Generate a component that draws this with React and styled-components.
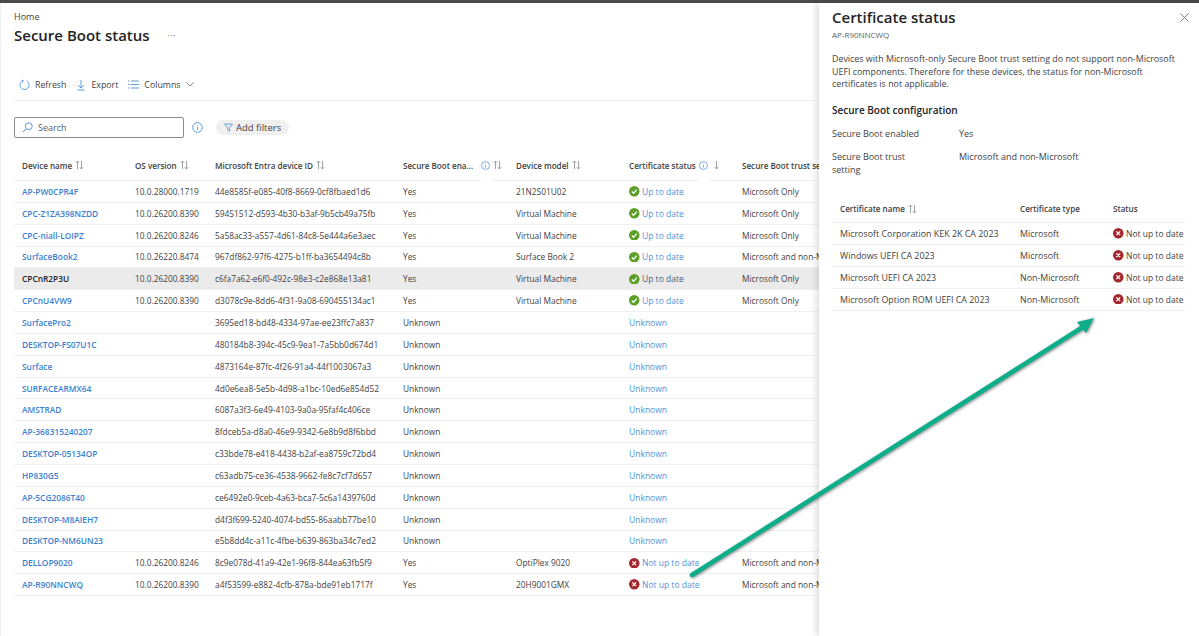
import React from "react";
import styled, { createGlobalStyle } from "styled-components";

const devices = [
  ["AP-PW0CPR4F", "10.0.28000.1719", "44e8585f-e085-40f8-8669-0cf8fbaed1d6", "Yes", "21N2S01U02", "ok", "Microsoft Only"],
  ["CPC-Z1ZA398NZDD", "10.0.26200.8390", "59451512-d593-4b30-b3af-9b5cb49a75fb", "Yes", "Virtual Machine", "ok", "Microsoft Only"],
  ["CPC-niall-LOIPZ", "10.0.26200.8246", "5a58ac33-a557-4d61-84c8-5e444a6e3aec", "Yes", "Virtual Machine", "ok", "Microsoft Only"],
  ["SurfaceBook2", "10.0.26220.8474", "967df862-97f6-4275-b1ff-ba3654494c8b", "Yes", "Surface Book 2", "ok", "Microsoft and non-Microsoft"],
  ["CPCnR2P3U", "10.0.26200.8390", "c6fa7a62-e6f0-492c-98e3-c2e868e13a81", "Yes", "Virtual Machine", "ok", "Microsoft Only"],
  ["CPCnU4VW9", "10.0.26200.8390", "d3078c9e-8dd6-4f31-9a08-690455134ac1", "Yes", "Virtual Machine", "ok", "Microsoft Only"],
  ["SurfacePro2", "", "3695ed18-bd48-4334-97ae-ee23ffc7a837", "Unknown", "", "unknown", ""],
  ["DESKTOP-FS07U1C", "", "480184b8-394c-45c9-9ea1-7a5bb0d674d1", "Unknown", "", "unknown", ""],
  ["Surface", "", "4873164e-87fc-4f26-91a4-44f1003067a3", "Unknown", "", "unknown", ""],
  ["SURFACEARMX64", "", "4d0e6ea8-5e5b-4d98-a1bc-10ed6e854d52", "Unknown", "", "unknown", ""],
  ["AMSTRAD", "", "6087a3f3-6e49-4103-9a0a-95faf4c406ce", "Unknown", "", "unknown", ""],
  ["AP-368315240207", "", "8fdceb5a-d8a0-46e9-9342-6e8b9d8f6bbd", "Unknown", "", "unknown", ""],
  ["DESKTOP-05134OP", "", "c33bde78-e418-4438-b2af-ea8759c72bd4", "Unknown", "", "unknown", ""],
  ["HP830G5", "", "c63adb75-ce36-4538-9662-fe8c7cf7d657", "Unknown", "", "unknown", ""],
  ["AP-5CG2086T40", "", "ce6492e0-9ceb-4a63-bca7-5c6a1439760d", "Unknown", "", "unknown", ""],
  ["DESKTOP-M8AIEH7", "", "d4f3f699-5240-4074-bd55-86aabb77be10", "Unknown", "", "unknown", ""],
  ["DESKTOP-NM6UN23", "", "e5b8dd4c-a11c-4fbe-b639-863ba34c7ed2", "Unknown", "", "unknown", ""],
  ["DELLOP9020", "10.0.26200.8246", "8c9e078d-41a9-42e1-96f8-844ea63fb5f9", "Yes", "OptiPlex 9020", "bad", "Microsoft and non-Microsoft"],
  ["AP-R90NNCWQ", "10.0.26200.8390", "a4f53599-e882-4cfb-878a-bde91eb1717f", "Yes", "20H9001GMX", "bad", "Microsoft and non-Microsoft"],
];

const certificates = [
  ["Microsoft Corporation KEK 2K CA 2023", "Microsoft"],
  ["Windows UEFI CA 2023", "Microsoft"],
  ["Microsoft UEFI CA 2023", "Non-Microsoft"],
  ["Microsoft Option ROM UEFI CA 2023", "Non-Microsoft"],
];

const statusLabels = { ok: "Up to date", bad: "Not up to date", unknown: "Unknown" };

// Icons
const SortIcon = () => (
  <IconSvg width="9" height="10" viewBox="0 0 9 10" fill="none" stroke="#8a8a8a" strokeWidth="0.8">
    <path d="M2.5 9V1M.8 2.8 2.5 1l1.7 1.8M6.5 1v8M4.8 7.2 6.5 9l1.7-1.8" />
  </IconSvg>
);

const DownIcon = () => (
  <IconSvg width="7" height="10" viewBox="0 0 7 10" fill="none" stroke="#8a8a8a" strokeWidth="0.8">
    <path d="M3.5 1v8M1.6 7 3.5 9l1.9-2" />
  </IconSvg>
);

const InfoIcon = ({ size = 9 }) => (
  <IconSvg width={size} height={size} viewBox="0 0 10 10" fill="none" stroke="#4a90d9" strokeWidth="0.8">
    <circle cx="5" cy="5" r="4.4" />
    <path d="M5 4.4v2.8M5 2.6v.8" />
  </IconSvg>
);

const CheckIcon = () => (
  <IconSvg width="10.5" height="10.5" viewBox="0 0 10 10">
    <circle cx="5" cy="5" r="5" fill="#5b9f24" />
    <path d="M2.7 5.2 4.4 6.9 7.4 3.5" fill="none" stroke="#fff" strokeWidth="1.2" />
  </IconSvg>
);

const ErrorIcon = () => (
  <IconSvg width="10.5" height="10.5" viewBox="0 0 10 10">
    <circle cx="5" cy="5" r="5" fill="#a4262c" />
    <path d="M3.2 3.2l3.6 3.6M6.8 3.2 3.2 6.8" fill="none" stroke="#fff" strokeWidth="1.3" />
  </IconSvg>
);

const RefreshIcon = () => (
  <IconSvg width="11" height="12" viewBox="0 0 12 12" fill="none" stroke="#4a90d9" strokeWidth="0.9">
    <path d="M4.6 1.2A5 5 0 1 0 8.4 1.6M2.8 .6 4.6 1.2 3.9 3" />
  </IconSvg>
);

const ExportIcon = () => (
  <IconSvg width="10" height="12" viewBox="0 0 10 12" fill="none" stroke="#4a90d9" strokeWidth="0.9">
    <path d="M5 1v8M2 6.2 5 9l3-2.8M1.5 11h7" />
  </IconSvg>
);

const ColumnsIcon = () => (
  <IconSvg width="11" height="9" viewBox="0 0 11 9" fill="none" stroke="#4a90d9" strokeWidth="0.9">
    <path d="M3 1h8M3 4.5h8M3 8h8M0 1h1.5M0 4.5h1.5M0 8h1.5" />
  </IconSvg>
);

const ChevronIcon = () => (
  <IconSvg width="8" height="5" viewBox="0 0 8 5" fill="none" stroke="#707070" strokeWidth="0.8">
    <path d="M.5.5 4 4 7.5.5" />
  </IconSvg>
);

const SearchIcon = () => (
  <IconSvg width="11" height="11" viewBox="0 0 11 11" fill="none" stroke="#4a90d9" strokeWidth="0.9">
    <circle cx="6.8" cy="4.2" r="3.4" />
    <path d="M4.3 6.7.8 10.2" />
  </IconSvg>
);

const FilterIcon = () => (
  <IconSvg width="9" height="9" viewBox="0 0 9 9" fill="none" stroke="#4a90d9" strokeWidth="0.8">
    <path d="M.5 1h8L5.4 4.8V8.2L3.6 7V4.8z" />
  </IconSvg>
);

const CloseIcon = () => (
  <CloseSvg width="9" height="9" viewBox="0 0 9 9" fill="none" stroke="#616161" strokeWidth="0.8">
    <path d="M.5.5l8 8M8.5.5l-8 8" />
  </CloseSvg>
);

function StatusIcon({ status }) {
  if (status === "ok") return <CheckIcon />;
  if (status === "bad") return <ErrorIcon />;
  return null;
}

export default function App() {
  return (
    <>
      <GlobalStyle />
      <Page>
        <TopBar />
        <Content>
          <Main>
            <Breadcrumb>Home</Breadcrumb>
            <TitleRow>
              <PageTitle>Secure Boot status</PageTitle>
              <MoreDots>···</MoreDots>
            </TitleRow>
            <Toolbar>
              <ToolButton>
                <RefreshIcon />
                Refresh
              </ToolButton>
              <ToolButton>
                <ExportIcon />
                Export
              </ToolButton>
              <ToolButton>
                <ColumnsIcon />
                Columns
                <ChevronIcon />
              </ToolButton>
            </Toolbar>
            <FilterRow>
              <SearchBox>
                <SearchIcon />
                Search
              </SearchBox>
              <InfoIcon size={11} />
              <FilterPill>
                <FilterIcon />
                Add filters
              </FilterPill>
            </FilterRow>
            <DeviceTable>
              <DeviceHead>
                <HeadCell>Device name <SortIcon /></HeadCell>
                <HeadCell>OS version <SortIcon /></HeadCell>
                <HeadCell>Microsoft Entra device ID <SortIcon /></HeadCell>
                <HeadCell>
                  Secure Boot ena...
                  <InfoSlot $left="5px" $right="0"><InfoIcon /></InfoSlot>
                  <SortIcon />
                </HeadCell>
                <HeadCell>Device model <SortIcon /></HeadCell>
                <HeadCell>
                  Certificate status
                  <InfoSlot $left="0" $right="2px"><InfoIcon /></InfoSlot>
                  <DownIcon />
                </HeadCell>
                <HeadCell>Secure Boot trust setting</HeadCell>
              </DeviceHead>
              {devices.map(([name, os, id, enabled, model, status, trust]) => (
                <DeviceRow key={id} $selected={name === "CPCnR2P3U"}>
                  <DeviceName $selected={name === "CPCnR2P3U"}>{name}</DeviceName>
                  <Cell>{os}</Cell>
                  <Cell>{id}</Cell>
                  <Cell>{enabled}</Cell>
                  <Cell>{model}</Cell>
                  <StatusCell>
                    <StatusIcon status={status} />
                    <StatusLink $selected={name === "CPCnR2P3U"}>{statusLabels[status]}</StatusLink>
                  </StatusCell>
                  <Cell>{trust}</Cell>
                </DeviceRow>
              ))}
            </DeviceTable>
          </Main>

          <Panel>
            <PanelHeader>
              <PanelTitle>Certificate status</PanelTitle>
              <CloseIcon />
            </PanelHeader>
            <PanelSub>AP-R90NNCWQ</PanelSub>
            <PanelText>
              Devices with Microsoft-only Secure Boot trust setting do not support non-Microsoft
              UEFI components. Therefore for these devices, the status for non-Microsoft
              certificates is not applicable.
            </PanelText>
            <SectionTitle>Secure Boot configuration</SectionTitle>
            <ConfigGrid>
              <span>Secure Boot enabled</span>
              <span>Yes</span>
              <span>Secure Boot trust setting</span>
              <span>Microsoft and non-Microsoft</span>
            </ConfigGrid>
            <CertTable>
              <CertHead>
                <HeadCell>Certificate name <SortIcon /></HeadCell>
                <HeadCell>Certificate type</HeadCell>
                <HeadCell>Status</HeadCell>
              </CertHead>
              {certificates.map(([name, type]) => (
                <CertRow key={name}>
                  <CertCell>{name}</CertCell>
                  <CertCell>{type}</CertCell>
                  <CertStatus>
                    <ErrorIcon />
                    {statusLabels.bad}
                  </CertStatus>
                </CertRow>
              ))}
            </CertTable>
          </Panel>
        </Content>

        {/* Annotation arrow drawn over the screenshot */}
        <Arrow viewBox="0 0 1199 636" fill="#0fae8b">
          <path d="M692 575 1086 325" fill="none" stroke="#0fae8b" strokeWidth="4.5" strokeLinecap="round" />
          <path d="M1094 318 1077 322 1086 333z" />
        </Arrow>
      </Page>
    </>
  );
}

const GlobalStyle = createGlobalStyle`
  html, body {
    margin: 0;
    padding: 0;
    background: #fff;
  }
  body {
    font-family: "Open Sans", "Noto Sans", "Liberation Sans", sans-serif;
    font-size: 9px;
    color: #424242;
  }
`;

const Page = styled.div`
  position: relative;
  width: 1199px;
  height: 636px;
  overflow: hidden;
  background: #fff;
`;

const TopBar = styled.div`
  height: 3px;
  background: #4a4a4a;
`;

const Content = styled.div`
  display: flex;
  height: 633px;
`;

const IconSvg = styled.svg`
  flex: none;
`;

const CloseSvg = styled.svg`
  flex: none;
  margin-right: -4px;
`;

const Main = styled.main`
  width: 819px;
  flex: none;
  padding: 7px 0 0 13px;
  box-sizing: border-box;
  border-left: 1px solid #f0f0f0;
  overflow: hidden;
`;

const Breadcrumb = styled.div`
  font-size: 9px;
  line-height: 13px;
  color: #424242;
`;

const TitleRow = styled.div`
  display: flex;
  align-items: center;
  gap: 18px;
  margin-top: 1px;
`;

const PageTitle = styled.h1`
  margin: 0;
  font-size: 15px;
  line-height: 22px;
  font-weight: 600;
  color: #242424;
`;

const MoreDots = styled.span`
  font-size: 9px;
  letter-spacing: 0.5px;
  color: #616161;
`;

const Toolbar = styled.div`
  display: flex;
  align-items: center;
  gap: 10px;
  height: 25px;
  margin-top: 26px;
  padding: 0 0 3px 5px;
  border-bottom: 1px solid #f0f0f0;
`;

const ToolButton = styled.div`
  display: flex;
  align-items: center;
  gap: 5px;
  font-size: 8.8px;
  color: #424242;
`;

const FilterRow = styled.div`
  display: flex;
  align-items: center;
  gap: 8px;
  margin-top: 16px;
`;

const SearchBox = styled.div`
  display: flex;
  align-items: center;
  gap: 5px;
  width: 170px;
  height: 21px;
  padding-left: 7px;
  box-sizing: border-box;
  border: 1px solid #8a8a8a;
  border-radius: 2px;
  font-size: 9px;
  color: #616161;
`;

const FilterPill = styled.div`
  display: flex;
  align-items: center;
  gap: 3px;
  height: 15px;
  margin-left: 5px;
  padding: 0 8px;
  border-radius: 8px;
  background: #f0f0f0;
  font-size: 9.5px;
  color: #424242;
`;

const DeviceTable = styled.div`
  margin-top: 12px;
  width: 960px;
`;

const deviceColumns = "113px 80px 188px 113px 113px 113px 232px";

const DeviceHead = styled.div`
  display: grid;
  grid-template-columns: ${deviceColumns};
  height: 30px;
  padding-left: 8px;
  align-items: center;
  border-bottom: 1px solid #f0f0f0;
`;

const HeadCell = styled.div`
  display: flex;
  align-items: center;
  gap: 3px;
  font-size: 8.1px;
  font-weight: 600;
  color: #424242;
  white-space: nowrap;
`;

const InfoSlot = styled.span`
  position: relative;
  display: inline-flex;
  margin: 0 ${(p) => p.$right} 0 ${(p) => p.$left};

  &::after {
    content: "";
    position: absolute;
    top: 19px;
    left: 0;
    width: 10px;
    height: 2px;
    background: #fff;
  }
`;

const DeviceRow = styled.div`
  display: grid;
  grid-template-columns: ${deviceColumns};
  height: 21.85px;
  box-sizing: border-box;
  padding-left: 8px;
  align-items: center;
  border-bottom: 1px solid #f0f0f0;
  background: ${(p) => (p.$selected ? "#ebebeb" : "transparent")};
`;

const Cell = styled.div`
  font-size: 8.35px;
  color: #424242;
  white-space: nowrap;
`;

const DeviceName = styled(Cell)`
  font-weight: 600;
  color: ${(p) => (p.$selected ? "#242424" : "#3b7fd0")};
`;

const StatusCell = styled(Cell)`
  display: flex;
  align-items: center;
  gap: 2.5px;
  font-size: 8.5px;
`;

const StatusLink = styled.span`
  color: ${(p) => (p.$selected ? "#3f5f85" : "#4f93da")};
`;

const Panel = styled.aside`
  position: relative;
  width: 380px;
  flex: none;
  padding: 4px 14px 0 13px;
  box-sizing: border-box;
  background: #fff;
  box-shadow: -3px 0 6px rgba(0, 0, 0, 0.12);
`;

const PanelHeader = styled.div`
  display: flex;
  justify-content: space-between;
  align-items: center;
`;

const PanelTitle = styled.h2`
  margin: 0;
  font-size: 15px;
  line-height: 20px;
  font-weight: 600;
  color: #242424;
`;

const PanelSub = styled.div`
  margin-top: 2px;
  font-size: 8px;
  line-height: 11px;
  color: #616161;
`;

const PanelText = styled.p`
  margin: 13px 0 0;
  width: 350px;
  font-size: 8.9px;
  line-height: 12.6px;
  color: #424242;
`;

const SectionTitle = styled.h3`
  margin: 12px 0 0;
  font-size: 10px;
  line-height: 14px;
  font-weight: 600;
  color: #242424;
`;

const ConfigGrid = styled.div`
  display: grid;
  grid-template-columns: 95px 1fr;
  column-gap: 32px;
  row-gap: 11px;
  margin-top: 11px;
  font-size: 9px;
  line-height: 12.5px;
  color: #424242;
`;

const CertTable = styled.div`
  margin-top: 19px;
`;

const certColumns = "180px 93px 1fr";

const CertHead = styled.div`
  display: grid;
  grid-template-columns: ${certColumns};
  height: 27px;
  padding-left: 8px;
  align-items: center;
  border-bottom: 1px solid #f0f0f0;
`;

const CertRow = styled.div`
  display: grid;
  grid-template-columns: ${certColumns};
  height: 21.85px;
  box-sizing: border-box;
  padding-left: 8px;
  align-items: center;
  border-bottom: 1px solid #f0f0f0;
`;

const CertCell = styled(Cell)`
  font-size: 8.9px;
`;

const CertStatus = styled(StatusCell)`
  color: #424242;
`;

const Arrow = styled.svg`
  position: absolute;
  inset: 0;
  width: 1199px;
  height: 636px;
  pointer-events: none;
  filter: drop-shadow(1px 1px 1.5px rgba(0, 0, 0, 0.45));
`;
